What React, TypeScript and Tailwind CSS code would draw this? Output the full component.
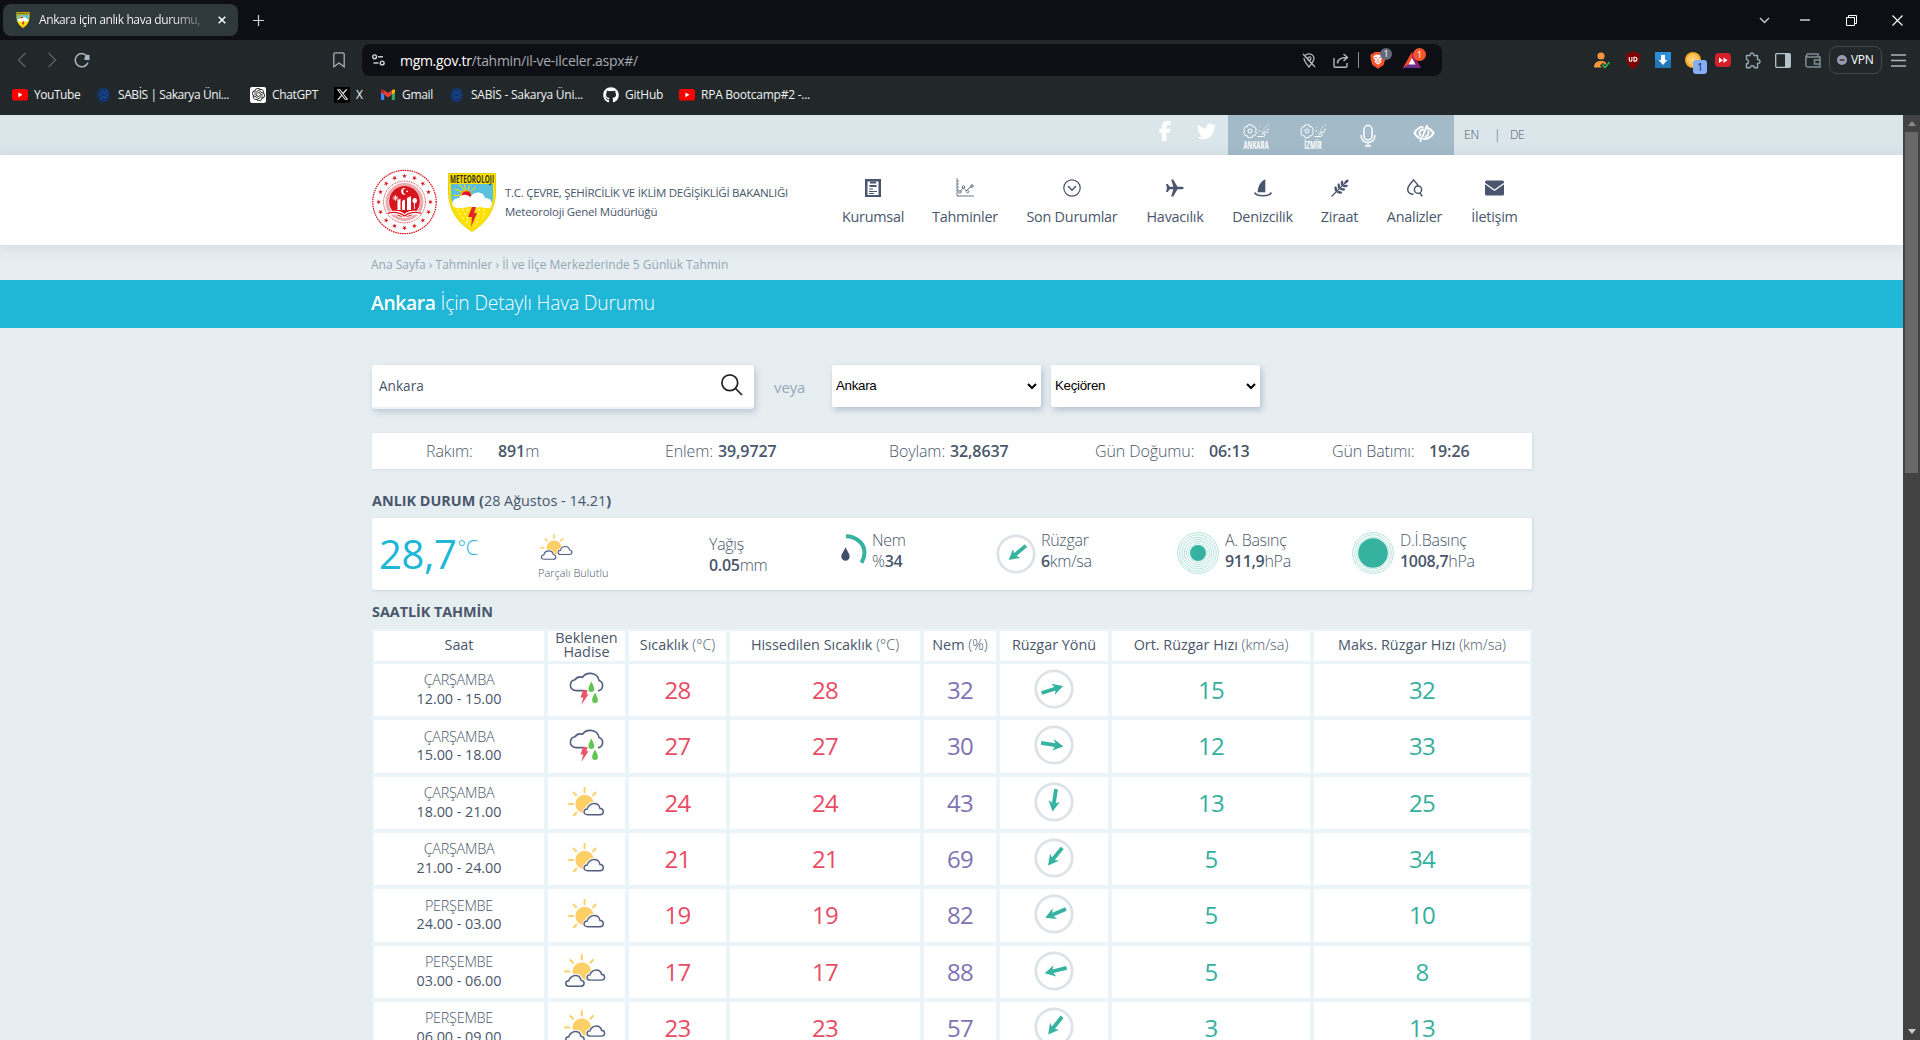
import React from "react";
import { FaFacebookF, FaTwitter, FaGithub, FaXTwitter } from "react-icons/fa6";
import { SiOpenai } from "react-icons/si";

const uiFont = "font-['Open_Sans',sans-serif]";

/* ---------- shared icons ---------- */

const YouTube = () => (
  <svg width="16" height="12" viewBox="0 0 16 12">
    <rect width="16" height="11.6" rx="2.6" fill="#ff0000" />
    <path d="M6.4 3.4v4.8l4-2.4z" fill="#fff" />
  </svg>
);

const Sabis = () => (
  <svg width="13" height="16" viewBox="0 0 13 16">
    <ellipse cx="6.5" cy="8" rx="6.3" ry="7.6" fill="#14346b" />
    <path d="M2.4 8.5l3-3.6 2 1.6 3-3M3 12.5l3-3 2 1.4 3-4" stroke="#1a4c90" strokeWidth="1.1" fill="none" />
  </svg>
);

const Gmail = () => (
  <svg width="14" height="11" viewBox="0 0 14 11">
    <path d="M0 1.6v8.5a.8.8 0 0 0 .8.8h2.4V4z" fill="#4285f4" />
    <path d="M14 1.6v8.5a.8.8 0 0 1-.8.8h-2.4V4z" fill="#34a853" />
    <path d="M10.8 1.2L13 .2c.6.1 1 .7 1 1.3v1.7l-3.2 2.4z" fill="#fbbc04" />
    <path d="M3.2 1.2L1 .2C.4.3 0 .9 0 1.5v1.7l3.2 2.4z" fill="#c5221f" />
    <path d="M3.2 1.2L7 4l3.8-2.8v4.4L7 8.4 3.2 5.6z" fill="#ea4335" />
  </svg>
);

const Shield = ({ w, h, title = true }: { w: number; h: number; title?: boolean }) => (
  <svg width={w} height={h} viewBox="0 0 48 59">
    <path d="M.5.5h47v18c0 18-9 31-23.5 40C9.5 49.5.5 36.5.5 18.5z" fill="#ffe100" stroke="#e8cf10" />
    <path d="M3 11h42v11c0 5-1 9-3 12H6c-2-4-3-8-3-12z" fill="#5bc0dc" />
    {title ? (
      <text x="2" y="9.6" textLength="44" lengthAdjust="spacingAndGlyphs" fontFamily="Open Sans, sans-serif" fontWeight="700" fontSize="10.5" fill="#33331f">METEOROLOJI</text>
    ) : (
      <path d="M3 6h42" stroke="#55521f" strokeWidth="6" strokeDasharray="5 1.500" />
    )}
    <path d="M17 20l-10-4M17 18l-6-7M18 17l-2-6M20 17l2-5M23 18l5-4M14 23l-9-1" stroke="#ffe100" strokeWidth="1" />
    <circle cx="18" cy="23" r="6" fill="#ffb400" />
    <circle cx="18.5" cy="23" r="4.800" fill="#e3122c" />
    <path d="M6 34c-4-5 0-9 5-9 2-4 8-4 11-1 5-7 14-5 15 1 6 0 8 4 6 9-3 3-8 0-11 0-5 2-8-1-12 0-4 1-10 2-14 0z" fill="#fff" />
    <path d="M9 37h2m3 0h2m3 0h2m9 0h2m3 0h2M11 41h2m3 0h2m12 0h2m3 0h2M14 45h2m3 0h2m8 0h2m3 0h1M18 49h2m8 0h2M21 53h1m5 0h1" stroke="#fff4a0" strokeWidth="1.3" />
    <path d="M24 34h4l-2 6h3l-6 14 1-10h-4z" fill="#e0262b" />
  </svg>
);

const starPath = "M0-2.5L.6-.8 2.4-.8 1 .3 1.5 2.1 0 1-1.5 2.1-1 .3-2.4-.8-.6-.8z";

const Ministry = () => (
  <svg width="65" height="66" viewBox="-32.5 -33 65 66">
    <circle r="31.7" fill="none" stroke="#d8141f" strokeWidth="1.2" strokeDasharray="1.6 .7" />
    {Array.from({ length: 16 }, (_, i) => (
      <path key={i} d={starPath} fill="#d8141f" transform={`rotate(${i * 22.5}) translate(0 -26)`} />
    ))}
    <circle r="20.9" fill="none" stroke="#d8141f" strokeWidth=".9" strokeDasharray="1 .8" />
    <circle r="17.4" fill="none" stroke="#e9abae" strokeWidth="3" />
    <circle r="15.4" cy="-.5" fill="#d8141f" />
    <path d="M1.5-13.5a3.3 3.3 0 1 0 0 5.600 2.800 2.800 0 1 1 0-5.600z" fill="#fff" />
    <circle cx="2.6" cy="-10.7" r=".9" fill="#fff" />
    <path d="M-7-2l3-1.500V8h-3zM-2.500-1l3-1.500V8h-3zM2.500-4l4-2V8h-4zM10.200 1.500a2.300 2.800 0 1 1 .1 0V7h-.9V1.500z" fill="#fff" />
    <path d="M-12-4h6M-9-7v6M-11-6l4 4M-7-6l-4 4" stroke="#fff" strokeWidth=".8" />
    <path d="M-16 10c5-2 12-2 16 2 4-4 11-4 16-2l-1 3c-5-1-11-1-15 3-4-4-10-4-15-3z" fill="#fff" />
    <path d="M-17 11.500c6-2 13-1 17 2.500 4-3.500 11-4.500 17-2.500" fill="none" stroke="#d8141f" strokeWidth="1.200" />
  </svg>
);

const cloudPath =
  "M4.2 11.5C2 11.5.8 10.2.8 8.7S2 6 3.800 6C4.500 3.200 7.500.8 10.500.8c3 0 5 1.800 5.600 4.600 2 .2 3.200 1.600 3.200 3.200s-1.300 2.900-3.200 2.900z";

const SunCloud = () => (
  <svg width="37" height="31" viewBox="0 0 37 31">
    <circle cx="16.6" cy="17" r="9.2" fill="#fdcf67" />
    <path d="M16.6 1v4M1 17h4M5.600 5.600l2.500 2.700M27.600 5.600l-2.500 2.700M6 28.300l2.500-2.700" stroke="#fdcf67" strokeWidth="2" strokeLinecap="round" />
    <g transform="translate(15.2 15.7) scale(1.04)">
      <path d={cloudPath} fill="#fff" stroke="#fff" strokeWidth="3.4" />
      <path d={cloudPath} fill="#fafafb" stroke="#515e80" strokeWidth="1.4" />
    </g>
  </svg>
);

const SunClouds = ({ w = 42 }: { w?: number }) => (
  <svg width={w} height={(w * 34) / 42} viewBox="0 0 42 34">
    <circle cx="17.8" cy="17.5" r="9.3" fill="#fdcf67" />
    <path d="M17.8 1v4.500M1 17.500h4.300M6.500 6l2.600 2.700M29 6l-2.600 2.700" stroke="#fdcf67" strokeWidth="2" strokeLinecap="round" />
    {["translate(22.3 15.2) scale(.95)", "translate(1 20.8) scale(.99)"].map((t) => (
      <g key={t} transform={t}>
        <path d={cloudPath} fill="#fff" stroke="#fff" strokeWidth="3.6" />
        <path d={cloudPath} fill="#fafafb" stroke="#515e80" strokeWidth="1.500" />
      </g>
    ))}
  </svg>
);

const Storm = () => (
  <svg width="36" height="34" viewBox="0 0 36 34">
    <path
      d="M16 18.6H7.500C3.500 18.600 1.400 16 1.400 13.300c0-3 2-5 4.600-5.500C7.500 5.500 10.500 4.300 13.500 5.300 15.300 2.500 18.500 1.200 21.800 1.400c4.200.2 7.600 3 8.200 7 2.600 1 3.800 3 3.600 5.300-.2 2.600-1.800 4.500-4 4.900"
      fill="none"
      stroke="#515e80"
      strokeWidth="1.6"
      strokeLinecap="round"
    />
    <path d="M14 18h4.500l-1 4.200h2L12.300 33l1.900-7.400h-2.700z" fill="#ea5669" />
    <path d="M22.300 9.500c1.800 3.500 2.900 5.500 2.900 7.600a2.900 3 0 0 1-5.800 0c0-2.100 1.300-4.100 2.900-7.600z" fill="#62c552" />
    <path d="M26 20.500c1.800 3.500 2.900 5.500 2.900 7.600a2.900 3 0 0 1-5.800 0c0-2.100 1.300-4.100 2.900-7.600z" fill="#62c552" />
  </svg>
);

/* Arrow points to the right at 0 degrees. */
const Wind = ({ deg }: { deg: number }) => (
  <svg width="40" height="40" viewBox="-20 -20 40 40">
    <circle r="18.2" fill="#fff" stroke="#dbe3e8" strokeWidth="2.8" />
    <path
      d="M-13-1.900H1L-1-5.800 9.500 0-1 5.800l2-3.900H-13z"
      fill="#35b3a0"
      transform={`rotate(${deg})`}
    />
  </svg>
);

const Pressure = ({ r }: { r: number }) => (
  <svg width="42" height="42" viewBox="-21 -21 42 42">
    {[20.4, 18.2, 16, 13.8, 11.6, 9.400].filter((x) => x > r + 0.5).map((x) => (
      <circle key={x} r={x} fill="none" stroke="#9fdbd1" strokeWidth=".8" />
    ))}
    <circle r={r} fill="#35b3a0" />
  </svg>
);

const CityGear = ({ label, x, len }: { label: string; x: number; len: number }) => (
  <svg width="28" height="29" viewBox="0 0 28 29">
    <g fill="none" stroke="#fff" strokeWidth="1">
      <circle cx="7" cy="7" r="2" />
      <path d="M5 .8h4l.6 2 2-.2 1.900 3.300L12.200 7l1.300 1.700-1.900 3.200-2-.2-.6 1.900H5l-.6-1.900-2 .2L.6 8.700 1.900 7 .6 5.900l1.800-3.300 2 .2z" />
      <path d="M20 8h5M14.500 12.500h6a1.500 1.500 0 1 0-1.500-1.500" />
      <path d="M15.500 7h1.500M18 8h.8M20.500 5h1M22 3h1.200M24.500 1h1.200M16.500 3h.8M24 5.500h2" />
    </g>
    <text x={x} y="25" textLength={len} lengthAdjust="spacingAndGlyphs" fontFamily="Open Sans, sans-serif" fontSize="10.500" fontWeight="700" fill="#fff">
      {label}
    </text>
  </svg>
);

const EyeSlash = () => (
  <svg width="22" height="17" viewBox="0 0 22 17" fill="none" stroke="#fff">
    <path d="M9.500 2C6 2 3.500 4.500 1.500 8c1.300 2.500 3 4.300 5 5.200M13.500 2.500C16.500 3.500 19 5.500 20.500 8c-2 3.500-5.200 6-9.500 6" strokeWidth="2.200" strokeLinecap="round" />
    <path d="M11 4.500C8 4.500 6.300 6 6.500 8.500c.1 1 .6 2 1.300 2.600M15.200 5.500c1.200 3.500-.8 6-3.700 6.300" strokeWidth="1.800" />
    <path d="M14 .8L7.500 16" strokeWidth="1.900" strokeLinecap="round" />
  </svg>
);

const BraveLion = () => (
  <svg width="16" height="18" viewBox="0 0 16 18">
    <path d="M4.500 1h7L13 2.700l1.500-.2L15.700 5l-.6 1.500.4 1.200L13.500 14 8 17.800 2.500 14 .5 7.700.9 6.500.3 5l1.200-2.500 1.500.2z" fill="#fb542b" />
    <path d="M8 4l2-.6 2.600 1.900-.4 2.300-1.600 1.600 1 1.500L8 13.800l-3.600-3.100 1-1.500-1.600-1.600-.4-2.300L6 3.400z" fill="#fff" />
    <path d="M5 6.300l2 .7M11 6.300L9 7M8 7.500v2.300M6.500 10.500L8 11.300l1.500-.8" stroke="#fb542b" strokeWidth=".9" fill="none" />
  </svg>
);

/* ---------- browser chrome ---------- */

function TabStrip() {
  return (
    <div className="flex h-10 bg-[#0d0f14] pl-[3px] pt-1">
      <div className="flex h-8 w-[235px] items-center rounded-lg bg-[#2f383c] pl-[13px]">
        <Shield w={14} h={16} title={false} />
        <div className="ml-[9px] w-[165px] whitespace-nowrap bg-gradient-to-r from-white from-80% to-[#59605f] bg-clip-text text-[12px] tracking-[-0.39px] text-transparent">
          Ankara için anlık hava durumu,
        </div>
        <svg className="ml-[14px]" width="8" height="8" viewBox="0 0 8 8">
          <path d="M.7.7l6.600 6.600M7.300.7L.7 7.300" stroke="#fff" strokeWidth="1.500" />
        </svg>
      </div>
      <svg className="ml-[15px] mt-[11px]" width="11" height="11" viewBox="0 0 11 11">
        <path d="M5.500 0v11M0 5.500h11" stroke="#d3d6d9" strokeWidth="1.200" />
      </svg>
      <div className="ml-auto flex h-8 items-center pr-[17px]">
        <svg width="11" height="7" viewBox="0 0 11 7"><path d="M1 1l4.500 4.500L10 1" fill="none" stroke="#b9c6cc" strokeWidth="1.500" /></svg>
        <svg className="ml-[30px]" width="10" height="2"><path d="M0 1h10" stroke="#fff" strokeWidth="1.200" /></svg>
        <svg className="ml-9" width="11" height="11" viewBox="0 0 11 11"><path d="M.5 2.500h8v8h-8zM2.500 2.500V.5h8v8h-2" fill="none" stroke="#fff" /></svg>
        <svg className="ml-[35px]" width="11" height="11" viewBox="0 0 11 11"><path d="M.5.5l10 10M10.500.5l-10 10" stroke="#fff" strokeWidth="1.100" /></svg>
      </div>
    </div>
  );
}

function AddressRow() {
  return (
    <div className="flex h-10 items-center">
      <svg className="ml-[17px]" width="10" height="16" viewBox="0 0 10 16"><path d="M8.500 1L1.500 8l7 7" fill="none" stroke="#565d61" strokeWidth="1.500" /></svg>
      <svg className="ml-[20px]" width="10" height="16" viewBox="0 0 10 16"><path d="M1.500 1l7 7-7 7" fill="none" stroke="#565d61" strokeWidth="1.500" /></svg>
      <svg className="ml-[17px]" width="16" height="16" viewBox="0 0 16 16">
        <path d="M13.600 5A6.600 6.600 0 1 0 14 10.500" fill="none" stroke="#a9b8c0" strokeWidth="1.500" />
        <path d="M15.500 3v5h-5a4 4 0 0 1 5-5z" fill="#a9b8c0" />
      </svg>
      <svg className="ml-[243px]" width="12" height="16" viewBox="0 0 12 16"><path d="M.8 2.300A1.500 1.500 0 0 1 2.300.8h7.400a1.500 1.500 0 0 1 1.500 1.500v12.500L6 11 .8 14.800z" fill="none" stroke="#9fb0b9" strokeWidth="1.300" /></svg>
      <div className="ml-[17px] flex h-8 w-[1080px] items-center rounded-lg bg-[#0d0f14]">
        <svg className="ml-[10px]" width="13" height="12" viewBox="0 0 13 12" fill="none" stroke="#d8dcdf" strokeWidth="1.400">
          <circle cx="2.600" cy="2.800" r="1.900" /><path d="M6 2.800h5" /><circle cx="10.200" cy="9" r="1.900" /><path d="M1.500 9h5" />
        </svg>
        <div className="ml-[15px] whitespace-nowrap text-[14px] tracking-[-0.3px] text-[#a7acb1]">
          <span className="text-white">mgm.gov.tr</span>/tahmin/il-ve-ilceler.aspx#/
        </div>
        <div className="ml-auto flex items-center">
          <svg width="14" height="15" viewBox="0 0 14 15" fill="none" stroke="#b4b9bd" strokeWidth="1.300">
            <path d="M3 2.500C5 .3 9.500.3 11.300 3c1.700 2.800 0 5.500-4.300 11C4 10 1.800 7.500 2 5M1 1l12 13" /><circle cx="7.300" cy="5.500" r="1.600" />
          </svg>
          <svg className="ml-[17px]" width="16" height="15" viewBox="0 0 16 15" fill="none" stroke="#b4b9bd" strokeWidth="1.400">
            <path d="M1 5v8a1.200 1.200 0 0 0 1.200 1.200h10.600A1.200 1.200 0 0 0 14 13v-3M4.500 10.500c0-4 2.500-6 9.500-6M10.500 1L14.500 4.500l-4 3.500" />
          </svg>
          <div className="ml-[9px] h-4 w-px bg-[#8b9196]" />
          <div className="relative ml-[11px]">
            <BraveLion />
            <div className="absolute -top-[3px] left-[10px] flex h-3 w-3 items-center justify-center rounded-full bg-[#63687a] text-[9px] leading-3 text-white">1</div>
          </div>
          <div className="relative ml-[17px] mr-[21px]">
            <svg width="18" height="16" viewBox="0 0 18 16">
              <path d="M9 0L0 16h18z" fill="#9e1f63" /><path d="M9 0L0 16l9-5z" fill="#ff4724" /><path d="M0 16h18L9 10z" fill="#662d91" /><path d="M9 6l-3.500 6.500h7z" fill="#fff" />
            </svg>
            <div className="absolute -top-[4px] left-[10px] flex h-[13px] w-[13px] items-center justify-center rounded-full bg-[#fb542b] text-[9px] leading-3 text-white">1</div>
          </div>
        </div>
      </div>
      <div className="ml-[152px] flex items-center">
        <svg width="16" height="17" viewBox="0 0 16 17"><circle cx="7" cy="4" r="3.600" fill="#f9953c" /><path d="M0 15.500c0-5 3-6.500 7-6.500s5 1.500 5.500 3L9 15.500z" fill="#f9953c" /><path d="M7.500 12l3.500 4.500 5-6.500" fill="none" stroke="#22272a" strokeWidth="4" /><path d="M8 12.500l3 3 4.500-5.500" fill="none" stroke="#2cb757" strokeWidth="1.600" /></svg>
        <svg className="ml-4" width="14" height="18" viewBox="0 0 14 18"><path d="M7 .5c2 1.500 4.500 2 6.500 2 .5 7-.5 12-6.500 15.200C1 14.500 0 9.500.5 2.500c2 0 4.500-.5 6.500-2z" fill="#800000" stroke="#9b1212" strokeWidth=".5" /><path d="M3.300 6v3a1.300 1.300 0 0 0 2.600 0V6M8 6.200v3.900h1a1.800 1.800 0 0 0 0-3.900z" fill="none" stroke="#fff" strokeWidth="1.100" /></svg>
        <svg className="ml-[15px]" width="16" height="16" viewBox="0 0 16 16"><rect width="16" height="16" fill="#2a8fd8" /><rect y="8" width="16" height="8" fill="#2176b5" /><path d="M6 3h4v5h2.500L8 13 3.500 8H6z" fill="#fff" /></svg>
        <div className="relative ml-[14px]">
          <svg width="16" height="16" viewBox="0 0 16 16"><circle cx="8" cy="8" r="8" fill="#f7a52a" /><circle cx="8" cy="8" r="6.200" fill="#ffc14d" /><path d="M8 2v12M2 8h12M4 4l8 8M12 4l-8 8" stroke="#fbe1a4" strokeWidth=".8" /></svg>
          <div className="absolute left-2 top-2 flex h-[14px] w-[14px] items-center justify-center rounded-[3px] bg-[#84aef5] text-[10px] font-medium leading-3 text-[#17233b]">1</div>
        </div>
        <svg className="ml-[14px]" width="16" height="14" viewBox="0 0 16 14"><rect width="16" height="14" rx="4" fill="#d4202a" /><path d="M4 4.500l4 2.700L4 9.900zM8.500 4.500l4 2.700-4 2.700z" fill="#fff" /></svg>
        <svg className="ml-[14px]" width="16" height="17" viewBox="0 0 16 17"><path d="M1.500 3.500h3.700C4.500.2 9.500.2 8.800 3.500h3.700v4c3.400-.5 3.400 4.500 0 4v4.200H9.300c0-2.700-4.200-2.700-4.200 0H1.500v-3.900c2.600 0 2.600-4.300 0-4.300z" fill="none" stroke="#95a7b1" strokeWidth="1.400" strokeLinejoin="round" /></svg>
        <svg className="ml-[14px]" width="16" height="15" viewBox="0 0 16 15"><rect x=".7" y=".7" width="14.600" height="13.600" rx="1" fill="none" stroke="#b5c4cc" strokeWidth="1.300" /><rect x="10" y="1" width="5" height="13" fill="#b5c4cc" /></svg>
        <svg className="ml-[14px]" width="16" height="15" viewBox="0 0 16 15" fill="none" stroke="#7f8d96" strokeWidth="1.500"><path d="M13 4V1H2.500a1.700 1.700 0 0 0 0 3H15v10H2.500A1.700 1.700 0 0 1 .9 12.500v-10M15 7H9.500v4H15" /></svg>
        <div className="ml-2 flex h-7 w-[53px] items-center rounded-lg border border-[#414a4f] pl-[7px] text-[12px] tracking-[-0.3px] text-white">
          <svg className="mr-1" width="10" height="10" viewBox="0 0 10 10"><circle cx="5" cy="5" r="5" fill="#9a9ab2" /><path d="M2.500 5h5" stroke="#22272a" strokeWidth="1.300" /></svg>
          VPN
        </div>
        <svg className="ml-[9px]" width="15" height="13" viewBox="0 0 15 13"><path d="M0 1h15M0 6.500h15M0 12h15" stroke="#a7b6bd" strokeWidth="1.300" /></svg>
      </div>
    </div>
  );
}

const bookmarks: { icon: React.ReactNode; label: string; cls: string }[] = [
  { icon: <YouTube />, label: "YouTube", cls: "w-[85px] gap-[6px] tracking-[-0.45px]" },
  { icon: <Sabis />, label: "SABİS | Sakarya Üni...", cls: "w-[153px] gap-2 tracking-[-0.42px]" },
  { icon: <span className="flex h-4 w-4 items-center justify-center rounded-[2px] bg-white"><SiOpenai size={13} color="#222" /></span>, label: "ChatGPT", cls: "w-[84px] gap-[6px] tracking-[-0.35px]" },
  { icon: <span className="flex h-4 w-4 items-center justify-center bg-black"><FaXTwitter size={13} color="#ddd" /></span>, label: "X", cls: "w-[47px] gap-[6px]" },
  { icon: <Gmail />, label: "Gmail", cls: "w-[69px] gap-[7px] tracking-[-0.3px]" },
  { icon: <Sabis />, label: "SABİS - Sakarya Üni...", cls: "w-[153px] gap-2 tracking-[-0.25px]" },
  { icon: <FaGithub size={16} color="#fff" />, label: "GitHub", cls: "w-[76px] gap-[6px] tracking-[-0.25px]" },
  { icon: <YouTube />, label: "RPA Bootcamp#2 -...", cls: "w-[140px] gap-[6px] tracking-[-0.25px]" },
];

function Bookmarks() {
  return (
    <div className="flex h-[29px] items-center pl-3 text-[12px] text-[#f1f3f4]">
      {bookmarks.map((b) => (
        <div key={b.label} className={`flex shrink-0 items-center whitespace-nowrap ${b.cls}`}>
          {b.icon}
          {b.label}
        </div>
      ))}
    </div>
  );
}

/* ---------- site header ---------- */

function TopBar() {
  return (
    <div className="flex h-10 shrink-0 bg-[#dbe6eb] pl-[1155px] text-white">
      <FaFacebookF className="mt-[6px]" size={20} />
      <FaTwitter className="ml-[22px] mt-[7px]" size={19} />
      <div className="ml-3 flex h-10 w-[226px] bg-[#a3bbc9] pl-[15px] pt-[9px]">
        <CityGear label="ANKARA" x={0.5} len={25} />
        <div className="ml-[29px]"><CityGear label="İZMİR" x={4.3} len={17.500} /></div>
        <svg className="ml-[32px]" width="16" height="24" viewBox="0 0 16 24" fill="none" stroke="#fff" strokeWidth="1.500">
          <rect x="4" y="1.500" width="8" height="14.500" rx="4" /><path d="M1 11c0 10 14 10 14 0M8 18.500V22M5 22h6" />
        </svg>
        <div className="ml-[37px] mt-px"><EyeSlash /></div>
      </div>
      <div className="ml-[10px] flex h-10 items-center text-[12px] font-light text-[#49566b]">
        <span className="w-[30px] tracking-[-0.2px]">EN</span>
        <span className="w-[16px]">|</span>
        <span className="tracking-[-0.4px]">DE</span>
      </div>
    </div>
  );
}

const navIcon: Record<string, React.ReactNode> = {
  Kurumsal: (
    <svg width="16" height="18" viewBox="0 0 16 18"><path d="M0 0h16v18H0z" fill="#4a566e" /><path d="M2.500 2.500h11v13.500h-11z" fill="#fff" /><path d="M5 3.500h6M4.500 7h7" stroke="#4a566e" strokeWidth="2" /><path d="M4 10h4M4 12.500h8M4 14.500h5" stroke="#4a566e" /></svg>
  ),
  Tahminler: (
    <svg width="18" height="19" viewBox="0 0 18 19" fill="none" stroke="#6d788c" strokeWidth="1"><path d="M1 0v18h17M1 3h2M1 6h2M1 9h2M1 12h2M4.500 13.500l2.500-4 3.500 3.500 2.500-3 3.500-2" /><circle cx="3.800" cy="14" r="1.300" /><circle cx="7.500" cy="9" r="1.300" /><circle cx="11.500" cy="13.500" r="1.300" /><circle cx="16" cy="8" r="1.300" /></svg>
  ),
  "Son Durumlar": (
    <svg width="18" height="18" viewBox="0 0 18 18" fill="none" stroke="#4a566e" strokeWidth="1.200"><circle cx="9" cy="9" r="8.200" /><path d="M5 7l4 4.200L13 7" strokeWidth="1.500" /></svg>
  ),
  Havacılık: (
    <svg width="18" height="18" viewBox="0 0 18 18"><path d="M0 5h1.700l2 2.800h3.600L5.200.6h2L11.500 7.800h4c3 0 3 2.400 0 2.400h-4L7.200 17.400h-2l2.100-7.200H3.700L1.700 13H0l1-4z" fill="#4a566e" /></svg>
  ),
  Denizcilik: (
    <svg width="18" height="18" viewBox="0 0 18 18"><path d="M3.500 13.200C4 8 6 2.500 11.300.3V13.200z" fill="#4a566e" /><path d="M.8 13.500c1 4.300 15.400 4.300 16.400 0" fill="none" stroke="#4a566e" strokeWidth="1.700" /></svg>
  ),
  Ziraat: (
    <svg width="18" height="18" viewBox="0 0 18 18" fill="#4a566e"><path d="M.5 17.500L15 3" stroke="#4a566e" strokeWidth="1.200" /><ellipse cx="4.800" cy="10" rx="1.300" ry="2.700" transform="rotate(-10 4.800 10)" /><ellipse cx="7.800" cy="7" rx="1.300" ry="2.700" transform="rotate(-5 7.800 7)" /><ellipse cx="11" cy="4" rx="1.300" ry="2.600" transform="rotate(5 11 4)" /><ellipse cx="8.500" cy="13.400" rx="2.700" ry="1.300" transform="rotate(10 8.500 13.400)" /><ellipse cx="11.500" cy="10.300" rx="2.700" ry="1.300" transform="rotate(5 11.500 10.300)" /><ellipse cx="14.300" cy="7" rx="2.600" ry="1.300" transform="rotate(-5 14.300 7)" /><ellipse cx="15.500" cy="2.500" rx="2.500" ry="1.300" transform="rotate(-45 15.500 2.500)" /></svg>
  ),
  Analizler: (
    <svg width="18" height="18" viewBox="0 0 18 18" fill="none" stroke="#4a566e" strokeWidth="1.500"><path d="M7.500 15.300C4 15.300 1.700 13.200 1.700 10.300 1.700 7.300 4.500 4.500 7.500 1c2.500 2.600 4 4.200 4.800 6" /><circle cx="12" cy="10.700" r="3.600" /><path d="M14 14l2.200 3.400" /></svg>
  ),
  İletişim: (
    <svg width="19" height="16" viewBox="0 0 19 16"><rect y=".5" width="19" height="15" rx="1.500" fill="#4a566e" /><path d="M0 3.500l9.500 6.800L19 3.500" fill="none" stroke="#fff" strokeWidth="1.300" /></svg>
  ),
};

const nav: [string, string][] = [
  ["Kurumsal", "w-[62px]"],
  ["Tahminler", "w-[66px]"],
  ["Son Durumlar", "w-[92px]"],
  ["Havacılık", "w-[58px]"],
  ["Denizcilik", "w-[61px]"],
  ["Ziraat", "w-[37px]"],
  ["Analizler", "w-[57px]"],
  ["İletişim", "w-[47px]"],
];

function Header() {
  return (
    <div className="relative z-10 flex h-[90px] shrink-0 bg-white pl-[372px] shadow-[0_2px_14px_rgba(60,80,100,0.14)]">
      <div className="mt-[14px]"><Ministry /></div>
      <div className="ml-[11px] mt-[18px]"><Shield w={48} h={59} /></div>
      <div className="ml-[9px] mt-[28px] w-[337px] whitespace-nowrap text-[11.5px] font-medium leading-[19px] text-[#49566b]">
        <div className="tracking-[-0.28px]">T.C. ÇEVRE, ŞEHİRCİLİK VE İKLİM DEĞİŞİKLİĞİ BAKANLIĞI</div>
        <div className="tracking-[-0.22px]">Meteoroloji Genel Müdürlüğü</div>
      </div>
      <div className="flex gap-[28px] pt-[23px] text-[14.400px] tracking-[-0.24px] text-[#49566b]">
        {nav.map(([name, w]) => (
          <div key={name} className={`flex flex-col items-center ${w}`}>
            <div className="flex h-[19px] items-center">{navIcon[name]}</div>
            <div className="mt-[9px] whitespace-nowrap leading-[22px]">{name}</div>
          </div>
        ))}
      </div>
    </div>
  );
}

/* ---------- page body ---------- */

const Select = ({ value }: { value: string }) => (
  <div className="flex h-[42px] w-[209px] items-center justify-between rounded-[2px] bg-white pl-1 pr-[4px] font-['Liberation_Sans',sans-serif] text-[13.33px] tracking-[-0.3px] text-black shadow-[2px_3px_6px_rgba(90,110,150,0.35)]">
    {value}
    <svg width="10" height="7" viewBox="0 0 10 7"><path d="M1 1l4 4 4-4" fill="none" stroke="#000" strokeWidth="2" /></svg>
  </div>
);

function SearchRow() {
  return (
    <div className="flex">
      <div className="flex h-11 w-[382px] items-center justify-between rounded-[3px] border-b-2 border-[#eef2f7] bg-white pl-[7px] pr-[11px] text-[13.600px] text-[#49566b] shadow-[2px_3px_6px_rgba(90,110,150,0.3)]">
        Ankara
        <svg className="-mt-[3px]" width="22" height="22" viewBox="0 0 22 22" fill="none" stroke="#222" strokeWidth="1.700"><circle cx="8.800" cy="8.800" r="7.900" /><path d="M14.500 14.500l6.500 6.500" /></svg>
      </div>
      <div className="flex h-11 w-[78px] items-center pl-5 text-[14.800px] text-[#97a8b5]">veya</div>
      <Select value="Ankara" />
      <div className="w-[10px]" />
      <Select value="Keçiören" />
    </div>
  );
}

const facts: [string, string, string, string, string][] = [
  ["Rakım:", "891", "m", "w-[239px]", "w-[72px]"],
  ["Enlem:", "39,9727", "", "w-[224px]", "w-[53px]"],
  ["Boylam:", "32,8637", "", "w-[206px]", "w-[61px]"],
  ["Gün Doğumu:", "06:13", "", "w-[237px]", "w-[114px]"],
  ["Gün Batımı:", "19:26", "", "w-[160px]", "w-[97px]"],
];

function Facts() {
  return (
    <div className="mt-6 flex h-9 items-center bg-white pb-px pl-[54px] text-base text-[#49566b] shadow-[1px_1px_3px_rgba(60,90,110,0.13)]">
      {facts.map(([k, v, u, w, kw]) => (
        <div key={k} className={`flex shrink-0 whitespace-nowrap font-light tracking-[-0.1px] ${w}`}>
          <div className={kw}>{k}</div>
          <span className="font-semibold">{v}</span>
          {u}
        </div>
      ))}
    </div>
  );
}

const Reading = ({ label, pre = "", value, unit }: { label: string; pre?: string; value: string; unit: string }) => (
  <div className="whitespace-nowrap text-base font-light leading-[21px] tracking-[-0.3px] text-[#49566b]">
    <div>{label}</div>
    <div>{pre}<span className="font-semibold">{value}</span>{unit}</div>
  </div>
);

function Current() {
  return (
    <div className="mt-[6px] flex h-[72px] rounded-[3px] bg-white pl-[7px] shadow-[1px_1px_3px_rgba(60,90,110,0.15)]">
      <div className="flex w-[159px] pt-[9px] text-[#20b6d6]">
        <span className="text-[40px] leading-[54px] tracking-[-0.4px]">28,7</span>
        <span className="ml-px pt-2 text-[20px] font-light leading-[26px] tracking-[-0.2px]">°C</span>
      </div>
      <div className="w-[171px] pt-4">
        <div className="pl-[2px]"><SunClouds w={33} /></div>
        <div className="mt-[4px] text-[11px] font-light leading-4 text-[#49566b]">Parçalı Bulutlu</div>
      </div>
      <div className="w-[132px] pt-4"><Reading label="Yağış" value="0.05" unit="mm" /></div>
      <div className="flex w-[155px] pt-3">
        <svg className="mr-[5px] mt-[4px]" width="26" height="31" viewBox="0 0 26 31">
          <path d="M5 2.200c11 0 18.500 8 18.500 16.500 0 4-1.200 7-3 10" fill="none" stroke="#35b3a0" strokeWidth="4" />
          <path d="M4.500 13c1.500 4 4.200 6.500 4.200 9.500a4.200 4.200 0 0 1-8.400 0c0-3 3-5.500 4.200-9.500z" fill="#414e69" />
        </svg>
        <Reading label="Nem" pre="%" value="34" unit="" />
      </div>
      <div className="flex w-[181px] pt-3">
        <div className="mr-[5px] mt-[4px]"><Wind deg={140} /></div>
        <Reading label="Rüzgar" value="6" unit="km/sa" />
      </div>
      <div className="flex w-[175px] pt-3">
        <div className="mr-[6px] mt-[2px]"><Pressure r={8} /></div>
        <Reading label="A. Basınç" value="911,9" unit="hPa" />
      </div>
      <div className="flex pt-3">
        <div className="mr-[6px] mt-[2px]"><Pressure r={14.8} /></div>
        <Reading label="D.İ.Basınç" value="1008,7" unit="hPa" />
      </div>
    </div>
  );
}

const cols = "grid grid-cols-[170px_77px_97px_190px_72px_108px_198px_216px] gap-x-1";

const heads: [string, string][] = [
  ["Saat", ""],
  ["Beklenen Hadise", ""],
  ["Sıcaklık", "(°C)"],
  ["Hissedilen Sıcaklık", "(°C)"],
  ["Nem", "(%)"],
  ["Rüzgar Yönü", ""],
  ["Ort. Rüzgar Hızı", "(km/sa)"],
  ["Maks. Rüzgar Hızı", "(km/sa)"],
];

type Sky = "storm" | "sun" | "clouds";
const rows: [string, string, Sky, number, number, number, number, number, string][] = [
  ["ÇARŞAMBA", "12.00 - 15.00", "storm", 28, 32, -18, 15, 32, "h-[52px] mb-1"],
  ["ÇARŞAMBA", "15.00 - 18.00", "storm", 27, 30, 9, 12, 33, "h-[53px] mb-1"],
  ["ÇARŞAMBA", "18.00 - 21.00", "sun", 24, 43, 99, 13, 25, "h-[52px] mb-1"],
  ["ÇARŞAMBA", "21.00 - 24.00", "sun", 21, 69, 129, 5, 34, "h-[52px] mb-1"],
  ["PERŞEMBE", "24.00 - 03.00", "sun", 19, 82, 157, 5, 10, "h-[53px] mb-1"],
  ["PERŞEMBE", "03.00 - 06.00", "clouds", 17, 88, 166, 5, 8, "h-[52px] mb-1"],
  ["PERŞEMBE", "06.00 - 09.00", "clouds", 23, 57, 128, 3, 13, "h-[52px] mb-1"],
];

const Num = ({ n, c }: { n: number; c: string }) => (
  <div className={`flex items-center justify-center bg-white pb-px text-[24px] tracking-[-0.6px] ${c}`}>{n}</div>
);

function Hourly() {
  return (
    <div className="bg-[#eaf4f9] px-[2px] pt-[2px] text-[14.400px] text-[#49566b]">
      <div className={`${cols} mb-1 h-[29px]`}>
        {heads.map(([a, b]) => (
          <div key={a} className="flex items-center justify-center bg-white pb-[2px] text-center leading-[14px]">
            <div>{a}{b && <span className="font-light"> {b}</span>}</div>
          </div>
        ))}
      </div>
      {rows.map(([day, time, sky, t, hum, deg, avg, max, cls]) => (
        <div key={day + time} className={`${cols} ${cls}`}>
          <div className="flex flex-col justify-center bg-white pb-px text-center leading-[18.500px]">
            <div className="font-light tracking-[-0.25px]">{day}</div>
            <div className="tracking-[-0.05px]">{time}</div>
          </div>
          <div className={`flex items-center justify-center bg-white pb-0.5 ${sky === "clouds" ? "pr-[3px]" : ""}`}>
            {sky === "storm" ? <Storm /> : sky === "sun" ? <SunCloud /> : <SunClouds />}
          </div>
          <Num n={t} c="text-[#e84c65]" />
          <Num n={t} c="text-[#e84c65]" />
          <Num n={hum} c="text-[#7f73b4]" />
          <div className="flex items-center justify-center bg-white pb-[3px]"><Wind deg={deg} /></div>
          <Num n={avg} c="text-[#35b09e]" />
          <Num n={max} c="text-[#35b09e]" />
        </div>
      ))}
    </div>
  );
}

function Scrollbar() {
  return (
    <div className="flex w-[17px] shrink-0 flex-col items-center bg-[#424242] py-[6px]">
      <svg width="8" height="5"><path d="M4 0l4 5H0z" fill="#8b8b8b" /></svg>
      <div className="mt-[6px] h-[341px] w-[13px] bg-[#686868]" />
      <svg className="mt-auto" width="8" height="5"><path d="M0 0h8L4 5z" fill="#d0d0d0" /></svg>
    </div>
  );
}

export default function App() {
  return (
    <div className={`h-[1040px] w-[1920px] overflow-hidden ${uiFont}`}>
      <TabStrip />
      <div className="h-[75px] bg-[#22272a]">
        <AddressRow />
        <Bookmarks />
      </div>
      <div className="flex h-[925px]">
        <div className="flex h-[925px] w-[1903px] flex-col overflow-hidden bg-[#e6eef1]">
          <TopBar />
          <Header />
          <div className="flex h-[35px] shrink-0 items-center pl-[371px] pt-[4px] text-[12px] text-[#93a6b4]">
            Ana Sayfa › Tahminler › İl ve İlçe Merkezlerinde 5 Günlük Tahmin
          </div>
          <div className="flex h-12 shrink-0 items-center whitespace-pre bg-[#20b6d6] pb-px pl-[371px] text-[19.200px] font-light tracking-[-0.13px] text-white">
            <span className="font-semibold tracking-[-0.3px]">Ankara</span> İçin Detaylı Hava Durumu
          </div>
          <div className="ml-[372px] w-[1160px] pt-[37px]">
            <SearchRow />
            <Facts />
            <div className="mt-[22px] h-5 text-[14.400px] font-bold leading-5 text-[#49566b]">
              ANLIK DURUM (<span className="font-normal">28 Ağustos - 14.21</span>)
            </div>
            <div className="pt-px">
              <Current />
            </div>
            <div className="mb-[7px] mt-[12px] h-5 text-[14.400px] font-bold leading-5 tracking-[-0.05px] text-[#49566b]">SAATLİK TAHMİN</div>
            <Hourly />
          </div>
        </div>
        <Scrollbar />
      </div>
    </div>
  );
}
